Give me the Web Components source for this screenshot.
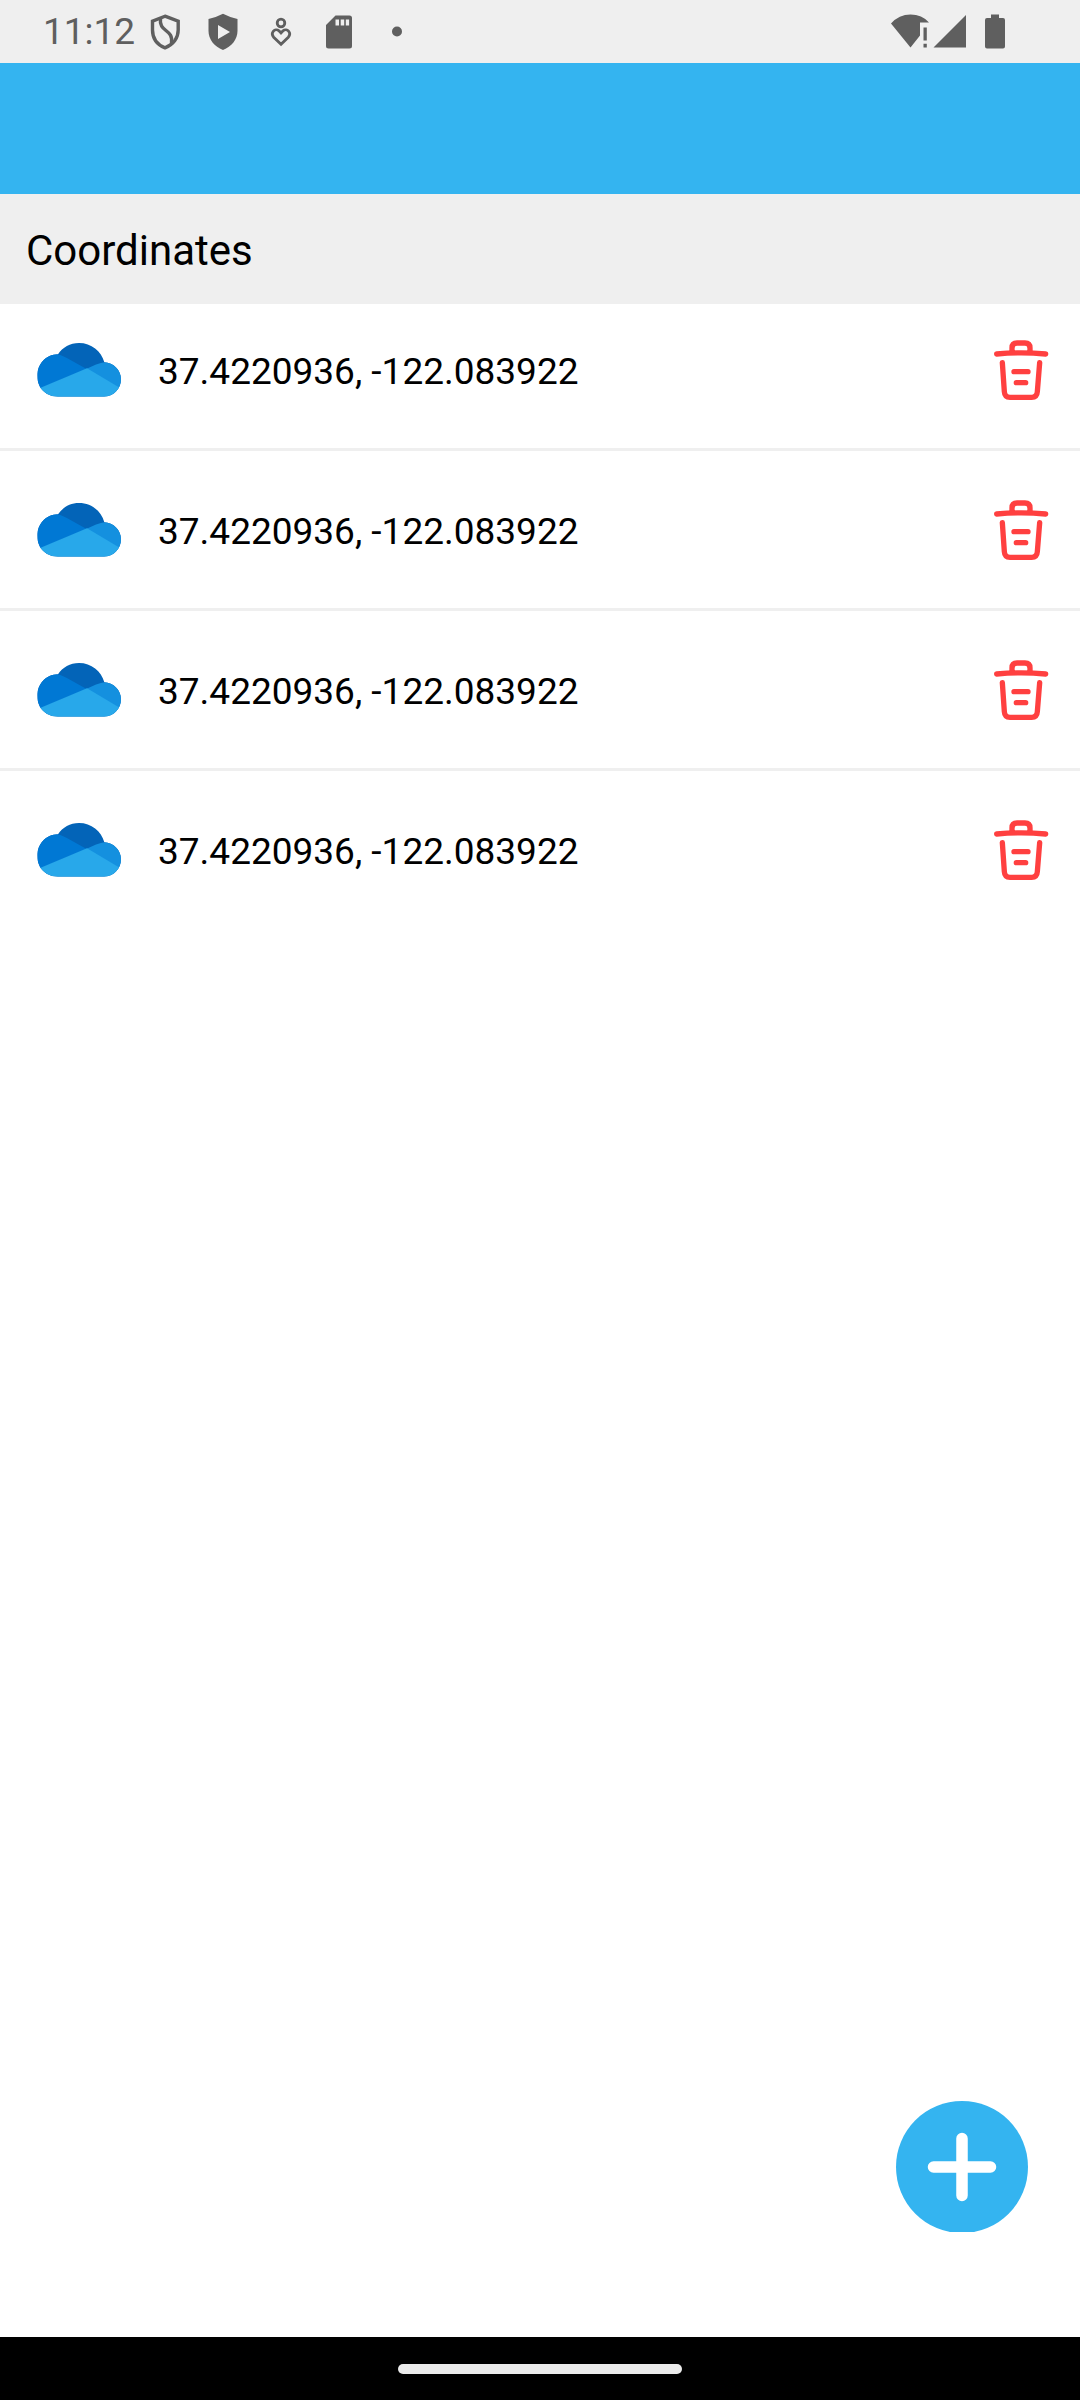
<!DOCTYPE html>
<html lang="en">
<head>
<meta charset="utf-8">
<meta name="viewport" content="width=device-width">
<title>Coordinates</title>
<style>
  html, body { height: 100%; margin: 0; }
  body { background: #fff; font-family: Roboto, sans-serif; color: #000; }
</style>
</head>
<body>
<coordinates-app></coordinates-app>
<script>
const define = (name, html) => {
  const template = document.createElement('template');
  template.innerHTML = html;
  customElements.define(name, class extends HTMLElement {
    constructor() {
      super();
      this.attachShadow({ mode: 'open' }).append(template.content.cloneNode(true));
    }
  });
};

define('status-bar', `
<style>
  :host { display: flex; justify-content: space-between; align-items: center; height: 63px;
    padding: 0 72px 0 43px; box-sizing: border-box; background: #efefef; color: #5f5f5f; }
  .group { display: flex; align-items: center; }
  .notices { gap: 20px; }
  time { font-size: 37px; line-height: 44px; width: 103px; white-space: nowrap; }
  svg { display: block; flex: none; fill: currentColor; }
</style>
<div class="group">
  <time>11:12</time>
  <div class="group notices">
    <svg width="38" height="38" viewBox="0 0 38 38"><g fill="none" stroke="currentColor" stroke-width="3.4"><path d="M19 3.2 32.2 8.2V17c0 8-5 14.600-13.200 17.800C10.800 31.600 6.500 25 6.500 17V8.200z"/><path d="M14.500 5.500C12.500 20 28 15 25.500 31"/></g></svg>
    <svg width="38" height="38" viewBox="0 0 38 38"><path fill-rule="evenodd" d="M19 .8Q26 4.500 33.500 6V18c0 8.500-6 15.500-14.500 19C10.500 33.500 4.500 26.500 4.500 18V6Q12 4.500 19 .8zM14 12v14l12-7z"/></svg>
    <svg width="38" height="38" viewBox="0 0 38 38"><g fill="none" stroke="currentColor" stroke-width="2.800"><circle cx="19" cy="10" r="3.800"/><path d="M19 31.300 11.700 24.200C8 20 13 14.500 17 17.800L19 20 21 17.800C25 14.500 30 20 26.300 24.200z"/></g></svg>
    <svg width="38" height="38" viewBox="0 0 38 38"><path fill-rule="evenodd" d="M15.500 2.500H29.500Q32 2.500 32 5V33Q32 35.500 29.500 35.500H8.500Q6 35.500 6 33V12zM15.500 6.500v6h3.500v-6zM20.700 6.500v6h3.500v-6zM25.800 6.500v6h3.300v-6z"/></svg>
    <svg width="38" height="38" viewBox="0 0 38 38"><circle cx="19" cy="18.500" r="5"/></svg>
  </div>
</div>
<svg width="118" height="38" viewBox="0 0 118 38">
  <path d="M1 10.500Q9 1.500 20.500 1.500T39 9.500H30V22.500L20.500 34.500zM33.500 14.500h3.300v13h-3.300zM33.500 30.800h3.300v3.700h-3.300zM43.500 34.500 76 2V34.500zM101 1.500h8v3.500h4Q115 5 115 7V33.500Q115 35.500 113 35.500H97Q95 35.500 95 33.500V7Q95 5 97 5h4z"/>
</svg>`);

define('section-title', `
<style>
  :host { display: flex; align-items: center; height: 110px; padding: 4px 26px 0; box-sizing: border-box;
    background: #efefef; position: relative; z-index: 1; }
  h1 { margin: 0; font-size: 42px; line-height: 50px; font-weight: 400; }
</style>
<h1><slot></slot></h1>`);

define('cloud-icon', `
<style>:host, svg { display: block; }</style>
<svg width="86" height="56" viewBox="0 0 258 168" aria-hidden="true">
  <clipPath id="outline"><path d="M66 164C34 164 4 142 4 102 4 66 29 38 66 37C80 16 102 3 129 3 166 3 196 27 205 61 232 62 255 84 255 112 255 141 232 164 204 164z"/></clipPath>
  <g clip-path="url(#outline)">
    <path fill="#0364b8" d="M0 0H258V168H0z"/>
    <path fill="#0078d4" d="M0 30C50 30 78 38 102 53L152 81 80 110 0 145z"/>
    <path fill="#1490df" d="M150 81C185 66 192 60 220 60L258 70V145L235 130z"/>
    <path fill="#28a8ea" d="M0 143 153 79 258 141V168H0z"/>
  </g>
</svg>`);

define('coordinate-row', `
<style>
  :host { display: flex; align-items: center; height: 157px; padding: 0 30px 0 36px; border-bottom: 3px solid #efefef; }
  :host(:last-child) { border-bottom: 0; }
  span { flex: 1; margin-left: 36px; padding-top: 4px; font-size: 37px; line-height: 44px; }
  button { padding: 0; border: 0; background: none; cursor: pointer; }
  svg { display: block; }
</style>
<cloud-icon></cloud-icon>
<span><slot></slot></span>
<button type="button" aria-label="Delete">
  <svg width="58" height="62" viewBox="0 0 174 186" fill="none" stroke="#ff4040" stroke-width="16" stroke-linecap="round" stroke-linejoin="round">
    <path d="M14 45Q87 38 161 45M60 39V27Q60 12 75 12H99Q114 12 114 27V39M31 71 37 158Q38 175 54 175H119Q135 175 136 158L143 71M66 98H108M73 131H101"/>
  </svg>
</button>`);

define('add-button', `
<style>
  :host { display: block; }
  button { display: block; width: 132px; height: 131px; padding: 0; border: 0; background: none; cursor: pointer; }
  svg { display: block; }
</style>
<button type="button" aria-label="Add coordinates">
  <svg width="132" height="131" viewBox="0 0 132 131"><circle cx="66" cy="66" r="66" fill="#34b4f0"/><path d="M37.500 66h57M66 37.500v57" stroke="#fff" stroke-width="11.500" stroke-linecap="round"/></svg>
</button>`);

define('navigation-bar', `
<style>
  :host { display: flex; align-items: center; justify-content: center; height: 63px; background: #000; }
  div { width: 284px; height: 10px; border-radius: 5px; background: #ebebeb; }
</style>
<div></div>`);

define('coordinates-app', `
<style>
  :host { display: flex; flex-direction: column; min-height: 100%; position: relative; }
  header { height: 131px; background: #34b4f0; }
  main { flex: 1; }
  .list { margin-top: -13px; }
  add-button { position: absolute; right: 52px; bottom: 168px; }
</style>
<status-bar></status-bar>
<header></header>
<main>
  <section-title>Coordinates</section-title>
  <div class="list">
    <coordinate-row>37.4220936, -122.083922</coordinate-row>
    <coordinate-row>37.4220936, -122.083922</coordinate-row>
    <coordinate-row>37.4220936, -122.083922</coordinate-row>
    <coordinate-row>37.4220936, -122.083922</coordinate-row>
  </div>
</main>
<add-button></add-button>
<navigation-bar></navigation-bar>`);
</script>
</body>
</html>
